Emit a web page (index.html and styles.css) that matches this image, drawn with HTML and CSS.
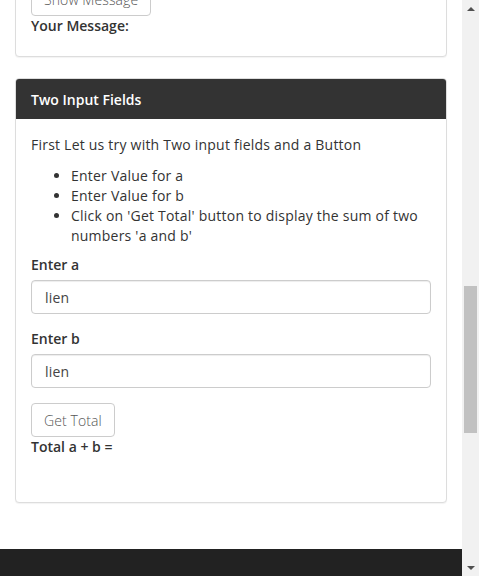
FILE: index.html
```html
<!DOCTYPE html>
<html lang="en">
<head>
<meta charset="utf-8">
<title>Two Input Fields</title>
<link rel="stylesheet" href="styles.css">
</head>
<body>
<div class="page">
  <div class="viewport">
    <div class="container">
      <div class="panel panel-first">
        <div class="panel-body">
          <button class="btn" type="button">Show Message</button>
          <label class="label">Your Message:</label>
        </div>
      </div>
      <div class="panel">
        <div class="panel-heading">Two Input Fields</div>
        <div class="panel-body panel-body-main">
          <p class="intro">First Let us try with Two input fields and a Button</p>
          <ul class="steps">
            <li>Enter Value for a</li>
            <li>Enter Value for b</li>
            <li>Click on 'Get Total' button to display the sum of two numbers 'a and b'</li>
          </ul>
          <div class="form-group">
            <label class="label">Enter a</label>
            <input class="form-control" type="text" value="lien">
          </div>
          <div class="form-group">
            <label class="label">Enter b</label>
            <input class="form-control" type="text" value="lien">
          </div>
          <button class="btn" type="button">Get Total</button>
          <label class="label">Total a + b = </label>
          <div class="spacer"></div>
        </div>
      </div>
    </div>
    <div class="footer"></div>
  </div>
  <div class="scrollbar">
    <div class="arrow arrow-up"></div>
    <div class="track"><div class="thumb"></div></div>
    <div class="arrow arrow-down"></div>
  </div>
</div>
</body>
</html>
```
FILE: styles.css
```css
* { box-sizing: border-box; }
html, body { margin: 0; padding: 0; }
body {
  font-family: "Open Sans", "Noto Sans", sans-serif;
  font-size: 14px;
  line-height: 20px;
  letter-spacing: 0.22px;
  color: #333;
  background: #fff;
  overflow: hidden;
}
.page {
  display: flex;
  height: 576px;
  width: 479px;
}
.viewport {
  flex: 1;
  overflow: hidden;
  display: flex;
  flex-direction: column;
}
.container {
  padding: 0 15px 0 15px;
}
.panel {
  border: 1px solid #ddd;
  border-radius: 4px;
  background: #fff;
  margin-bottom: 21px;
  box-shadow: 0 1px 1px rgba(0,0,0,0.05);
}
.panel-first {
  margin-top: -34px;
}
.panel-heading {
  background: #333;
  color: #fff;
  font-weight: 600;
  letter-spacing: 0;
  padding: 11px 15px 8px;
  border-radius: 3px 3px 0 0;
  border-bottom: 1px solid #333;
}
.panel-body {
  padding: 15px;
}
.panel-body-main {
  padding-top: 16px;
}
.btn {
  display: block;
  font-family: inherit;
  font-size: 14px;
  line-height: 20px;
  font-weight: 300;
  letter-spacing: 0.1px;
  color: #555;
  background: #fff;
  border: 1px solid #ccc;
  border-radius: 4px;
  padding: 7px 12px 5px;
  height: 34px;
}
.label {
  display: inline-block;
  font-weight: 600;
  letter-spacing: 0;
  margin-bottom: 5px;
  padding-top: 1px;
  margin-top: -1px;
}
.intro { margin: 0 0 11px; }
.steps {
  margin: 0 0 9px;
  padding-left: 40px;
}
.form-group { margin-bottom: 15px; }
.form-control {
  display: block;
  width: 100%;
  height: 34px;
  padding: 6px 13px;
  font-family: inherit;
  font-size: 14px;
  line-height: 20px;
  letter-spacing: 0.2px;
  color: #444;
  background: #fff;
  border: 1px solid #ccc;
  border-radius: 4px;
  box-shadow: inset 0 1px 1px rgba(0,0,0,0.075);
}
.spacer { height: 25px; }
.footer {
  margin-top: 25px;
  background: #222;
  flex: 1;
}
.scrollbar {
  width: 17px;
  background: #f1f1f1;
  display: flex;
  flex-direction: column;
}
.arrow {
  height: 17px;
  display: flex;
  align-items: center;
  justify-content: center;
}
.arrow::before {
  content: "";
  width: 0;
  height: 0;
  border-left: 4px solid transparent;
  border-right: 4px solid transparent;
}
.arrow-up::before { border-bottom: 4px solid #505050; }
.arrow-down::before { border-top: 4px solid #505050; }
.track { flex: 1; }
.thumb {
  margin: 269px 2px 0;
  height: 147px;
  background: #c1c1c1;
}
```
